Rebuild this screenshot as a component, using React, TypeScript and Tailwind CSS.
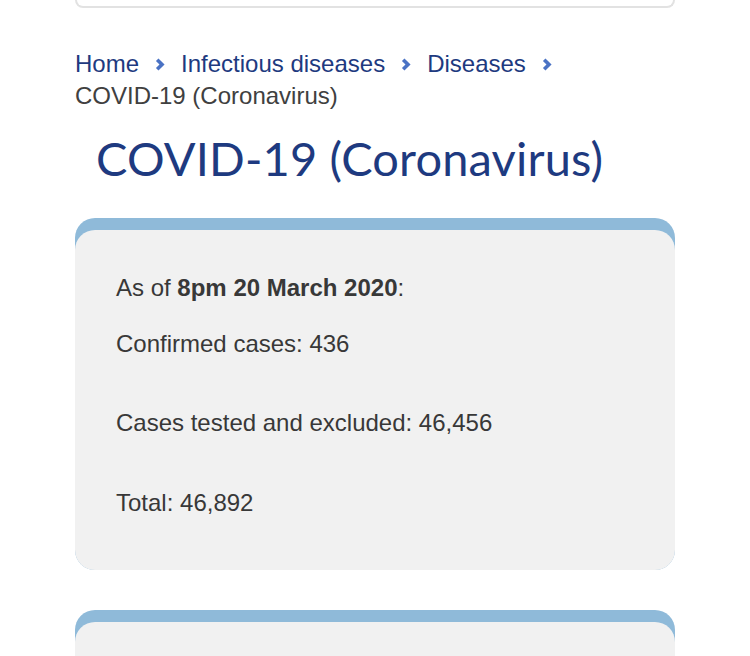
import React from "react";

const Chevron = () => (
  <svg width="10" height="13" viewBox="0 0 10 13" className="mx-[16px] inline-block align-middle relative -top-[1px]" aria-hidden>
    <path d="M2.2 1.8 L7 6.5 L2.2 11.2" fill="none" stroke="#4a72c4" strokeWidth="3.6" strokeLinejoin="miter" />
  </svg>
);

export default function App() {
  return (
    <div className="w-[750px] h-[656px] overflow-hidden bg-white" style={{ fontFamily: "'Liberation Sans', Arial, sans-serif" }}>
      <div className="mx-[75px] w-[600px]">
        <div className="h-[8px] rounded-b-[12px] border-2 border-t-0 border-[#e2e2e2]" />
        <nav className="mt-[40px] text-[24px] leading-[32px]">
          <a className="text-[#1e3a80]">Home</a>
          <Chevron />
          <a className="text-[#1e3a80]">Infectious diseases</a>
          <Chevron />
          <a className="text-[#1e3a80]">Diseases</a>
          <Chevron />
          <br />
          <span className="text-[#404040]">COVID-19 (Coronavirus)</span>
        </nav>
        <h1 className="mt-[18px] pl-[21px] text-[47px] leading-[56px] tracking-[0.15px] text-[#1e3a80]" style={{ fontFamily: "Lato, 'Open Sans', sans-serif" }}>
          COVID-19 (Coronavirus)
        </h1>
        <div className="mt-[32px] rounded-[20px] bg-[#8fbad9] pt-[12px]">
          <div className="rounded-[20px] bg-[#f1f1f1] px-[41px] pt-[44px] pb-[53px] text-[24px] leading-[28px] text-[#383838]">
            <p>As of <b>8pm 20 March 2020</b>:</p>
            <p className="mt-[28px]">Confirmed cases: 436</p>
            <p className="mt-[51px]">Cases tested and excluded: 46,456</p>
            <p className="mt-[52px]">Total: 46,892</p>
          </div>
        </div>
        <div className="mt-[40px] rounded-t-[20px] bg-[#8fbad9] pt-[12px]">
          <div className="h-[100px] rounded-t-[20px] bg-[#f1f1f1]" />
        </div>
      </div>
    </div>
  );
}
